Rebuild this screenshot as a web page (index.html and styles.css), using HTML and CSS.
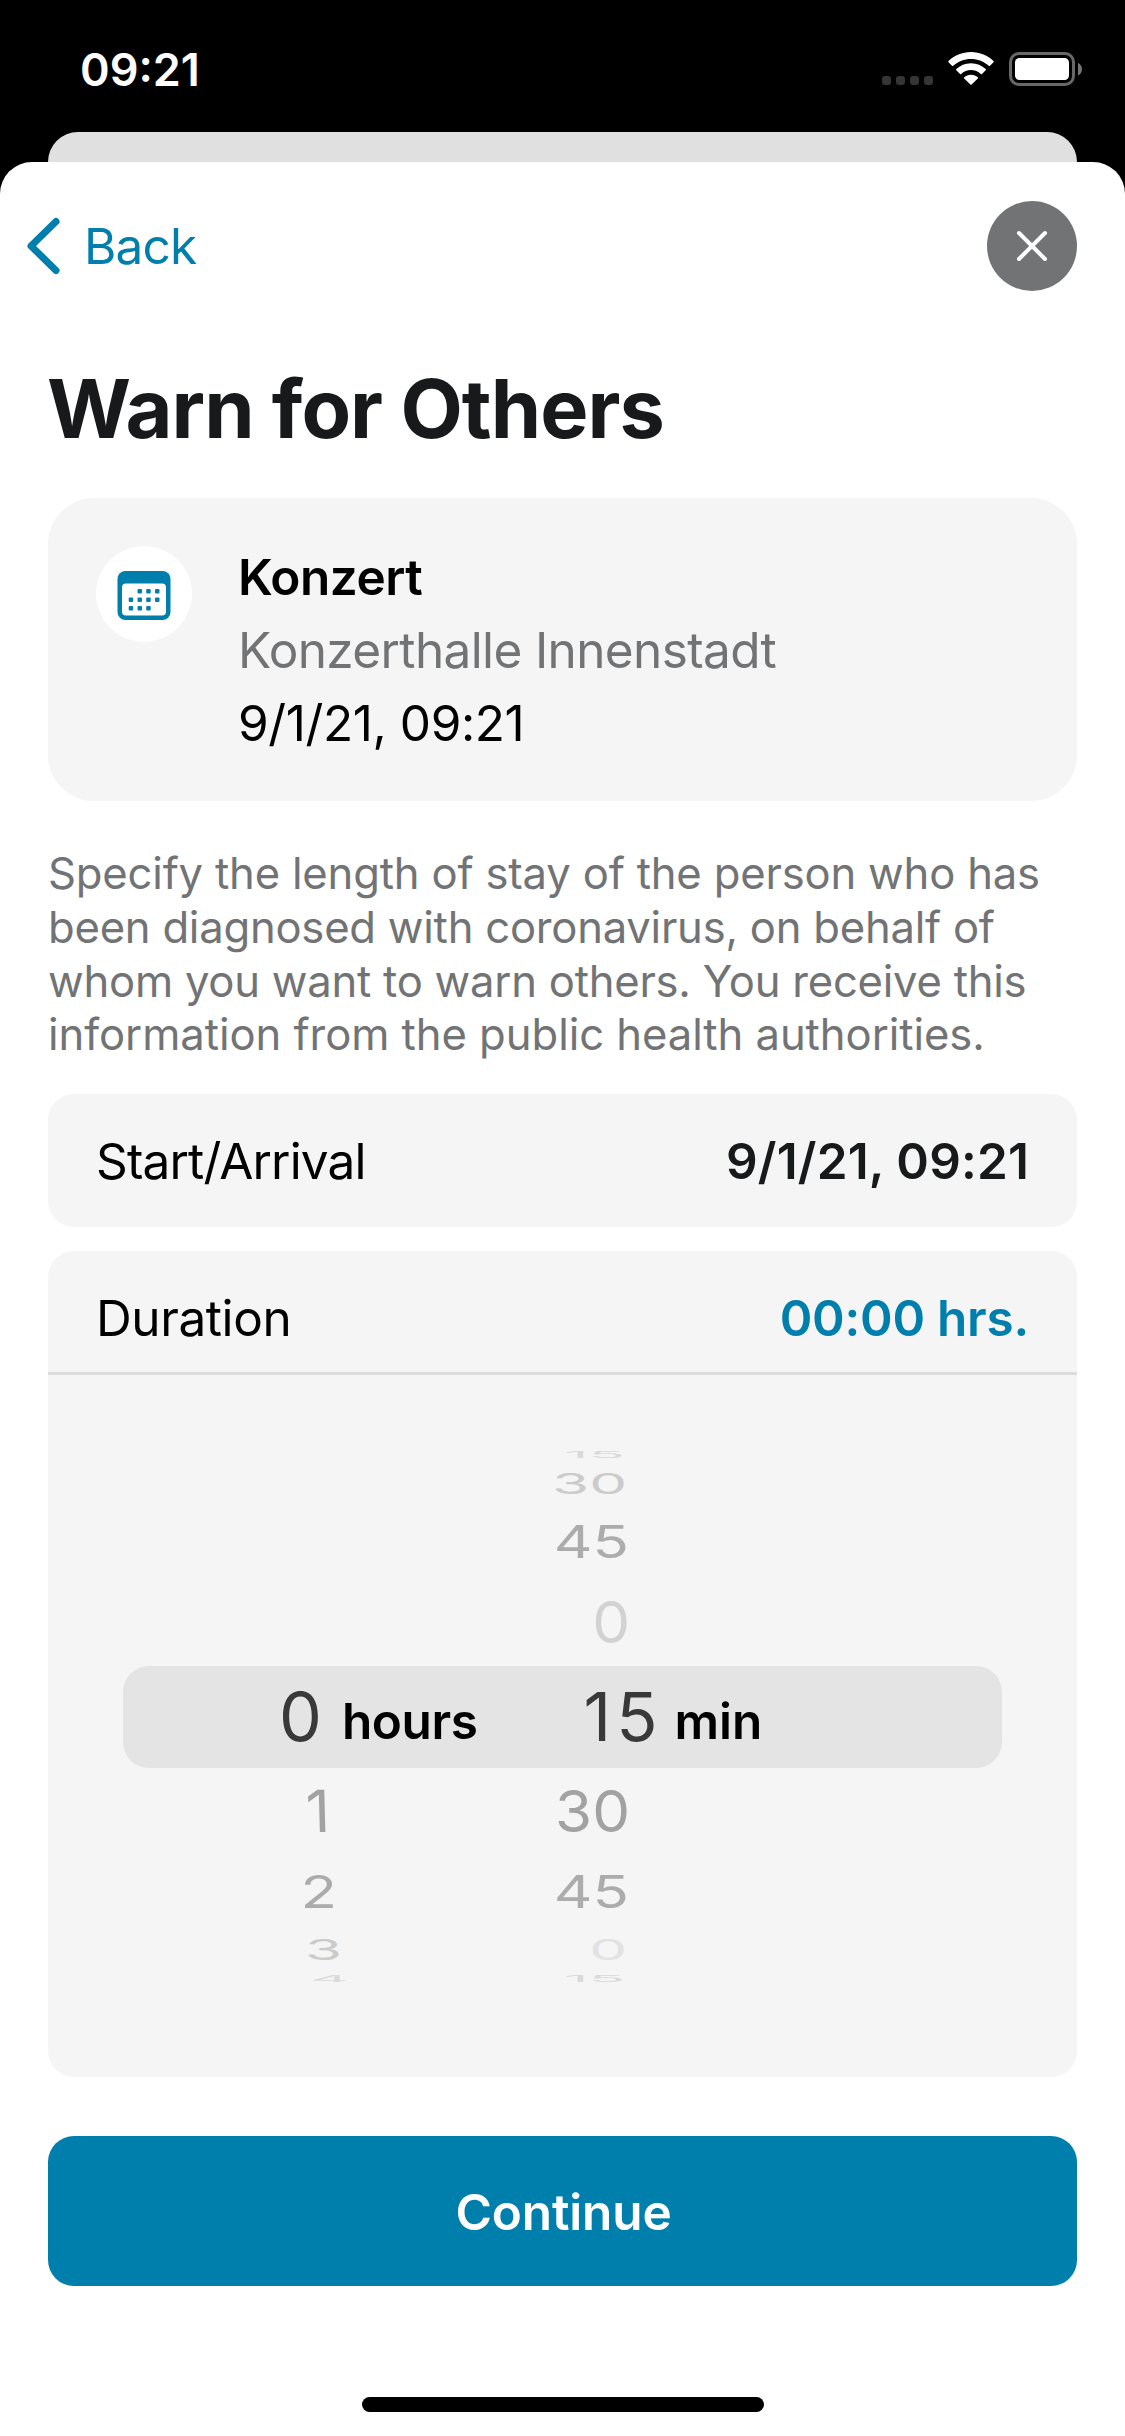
FILE: index.html
```html
<!DOCTYPE html>
<html lang="en">
<head>
<meta charset="utf-8">
<title>Warn for Others</title>
<link rel="stylesheet" href="styles.css">
</head>
<body>
<div class="screen">
  <header class="status">
    <span class="status-time">09:21</span>
    <div class="status-icons">
      <svg class="cellular" width="52" height="34" viewBox="0 0 52 34" fill="#353535">
        <rect x="0" y="24" width="9" height="9" rx="3"/><rect x="14" y="24" width="9" height="9" rx="3"/><rect x="28" y="24" width="9" height="9" rx="3"/><rect x="42" y="24" width="9" height="9" rx="3"/>
      </svg>
      <svg class="wifi" width="46" height="34" viewBox="0 0 46 34" fill="#fff">
        <path d="M23 0C32 0 39.800 3.500 45.500 9Q46 9.600 45.500 10.200L42 13.700Q41.300 14.200 40.700 13.700C36 9.500 29.800 7 23 7S10 9.500 5.300 13.700Q4.700 14.200 4 13.700L.5 10.200Q0 9.600.5 9C6.200 3.500 14 0 23 0Z"/>
        <path d="M23 11.200C28.800 11.200 33.800 13.400 37.700 17Q38.200 17.600 37.700 18.200L34 21.900Q33.400 22.400 32.800 21.900C30.200 19.500 26.800 18.100 23 18.100S15.800 19.500 13.200 21.900Q12.600 22.400 12 21.900L8.300 18.200Q7.800 17.600 8.300 17C12.200 13.400 17.200 11.200 23 11.200Z"/>
        <path d="M23 22.700C25.700 22.700 28.100 23.600 29.800 25.200Q30.300 25.800 29.800 26.400L23.600 32.600Q23 33.100 22.400 32.600L16.200 26.400Q15.700 25.800 16.200 25.200C17.900 23.600 20.300 22.700 23 22.700Z"/>
      </svg>
      <svg class="battery" width="73" height="34" viewBox="0 0 73 34">
        <rect x="1.500" y="1.500" width="63" height="31" rx="8.500" fill="none" stroke="#686868" stroke-width="3"/>
        <rect x="6" y="6" width="54" height="22" rx="4.500" fill="#fff"/>
        <path d="M69 11V23.500C71.500 22.500 73 20 73 17.200S71.500 12 69 11Z" fill="#777"/>
      </svg>
    </div>
  </header>
  <div class="sheet-behind"></div>
  <main class="sheet">
    <nav class="nav">
      <a class="back">
        <svg width="40" height="64" viewBox="0 0 40 64" fill="none" stroke="#007fad" stroke-width="7" stroke-linecap="round" stroke-linejoin="round"><path d="M32 7.500 7 32 32 56.500"/></svg>
        <span>Back</span>
      </a>
      <button class="close" aria-label="Close">
        <svg width="34" height="34" viewBox="0 0 34 34" stroke="#fff" stroke-width="4" stroke-linecap="round"><path d="M4 4 30 30M30 4 4 30"/></svg>
      </button>
    </nav>
    <h1 class="title">Warn for Others</h1>
    <section class="event">
      <div class="event-icon">
        <svg width="54" height="50" viewBox="0 0 54 50">
          <rect x="0.500" width="53" height="49" rx="8" fill="#007fad"/>
          <rect x="5" y="12.500" width="44" height="32" rx="4" fill="#fff"/>
          <g fill="#007fad">
            <rect x="20.500" y="18" width="4.500" height="4.500" rx="1"/><rect x="29.200" y="18" width="4.500" height="4.500" rx="1"/><rect x="38" y="18" width="4.500" height="4.500" rx="1"/>
            <rect x="11.700" y="26.500" width="4.500" height="4.500" rx="1"/><rect x="20.500" y="26.500" width="4.500" height="4.500" rx="1"/><rect x="29.200" y="26.500" width="4.500" height="4.500" rx="1"/><rect x="38" y="26.500" width="4.500" height="4.500" rx="1"/>
            <rect x="11.700" y="35" width="4.500" height="4.500" rx="1"/><rect x="20.500" y="35" width="4.500" height="4.500" rx="1"/><rect x="29.200" y="35" width="4.500" height="4.500" rx="1"/>
          </g>
        </svg>
      </div>
      <div class="event-text">
        <strong class="event-name">Konzert</strong>
        <span class="event-place">Konzerthalle Innenstadt</span>
        <span class="event-date">9/1/21, 09:21</span>
      </div>
    </section>
    <p class="hint">
      <span class="line">Specify the length of stay of the person who has</span>
      <span class="line snug">been diagnosed with coronavirus, on behalf of</span>
      <span class="line snug">whom you want to warn others. You receive this</span>
      <span class="line loose">information from the public health authorities.</span>
    </p>
    <section class="card row start">
      <span class="label-start">Start/Arrival</span>
      <b class="value-start">9/1/21, 09:21</b>
    </section>
    <section class="card duration">
      <div class="row duration-head">
        <span class="label-duration">Duration</span>
        <b class="value-duration">00:00 hrs.</b>
      </div>
      <div class="picker">
        <div class="tick edge"><span></span><span>15</span></div>
        <div class="tick far"><span></span><span>30</span></div>
        <div class="tick mid"><span></span><span>45</span></div>
        <div class="tick near faint"><span></span><span>0</span></div>
        <div class="selected">
          <span class="num">0</span><b class="unit hours">hours</b>
          <span class="num minutes">15</span><b class="unit">min</b>
        </div>
        <div class="tick near"><span class="tilt">1</span><span>30</span></div>
        <div class="tick mid"><span>2</span><span>45</span></div>
        <div class="tick far"><span>3</span><span class="dim">0</span></div>
        <div class="tick edge"><span>4</span><span>15</span></div>
      </div>
    </section>
    <button class="continue">Continue</button>
    <div class="home-bar"></div>
  </main>
</div>
</body>
</html>
```
FILE: styles.css
```css
* { box-sizing: border-box; }
body {
  margin: 0;
  background: #000;
  font-family: Inter, "Liberation Sans", sans-serif;
  color: #000;
}
button { border: 0; padding: 0; font-family: inherit; }
svg { display: block; }

.screen {
  width: 1125px;
  height: 2436px;
  display: flex;
  flex-direction: column;
  overflow: hidden;
}

/* Status bar */
.status {
  height: 132px;
  padding: 38px 43px 32px 80px;
  display: flex;
  align-items: center;
  justify-content: space-between;
  color: #fff;
}
.status-time { font-size: 45px; font-weight: 600; letter-spacing: 0; }
.status-icons { display: flex; align-items: center; }
.wifi { margin-left: 14px; }
.battery { margin-left: 15px; }

/* Sheets */
.sheet-behind {
  height: 30px;
  margin: 0 48px;
  border-radius: 30px 30px 0 0;
  background: #e0e0e0;
}
.sheet {
  flex: 1;
  display: flex;
  flex-direction: column;
  padding: 39px 48px 0;
  border-radius: 32px 32px 0 0;
  background: #fff;
}

.nav {
  height: 90px;
  margin-left: -24px;
  display: flex;
  align-items: center;
  justify-content: space-between;
}
.back {
  display: flex;
  align-items: center;
  gap: 20px;
  color: #007fad;
  font-size: 49.5px;
  letter-spacing: -0.8px;
}
.close {
  width: 90px;
  height: 90px;
  display: grid;
  place-items: center;
  border-radius: 50%;
  background: #727375;
}
.title {
  margin: 70px 0 40px -1px;
  font-size: 81px;
  font-weight: 700;
  line-height: 97px;
  letter-spacing: -0.95px;
  color: #17191a;
}

/* Event summary */
.event {
  height: 303px;
  padding: 42px 48px 0;
  display: flex;
  gap: 46px;
  border-radius: 46px;
  background: #f5f5f5;
}
.event-icon {
  width: 96px;
  height: 96px;
  margin-top: 6px;
  padding-top: 3px;
  display: grid;
  place-items: center;
  border-radius: 50%;
  background: #fff;
}
.event-text {
  display: flex;
  flex-direction: column;
  padding-top: 1px;
  font-size: 49.5px;
  line-height: 73px;
}
.event-name { font-weight: 600; letter-spacing: -0.5px; }
.event-place { color: #727375; letter-spacing: -0.63px; }
.event-date { letter-spacing: -0.4px; }

.hint {
  margin: 46px 0 32px;
  font-size: 43.6px;
  line-height: 53.75px;
  letter-spacing: -0.18px;
  color: #727375;
}
.line { display: block; white-space: nowrap; }
.snug { letter-spacing: -0.23px; }
.loose { letter-spacing: -0.05px; }

/* Cards */
.card { border-radius: 26px; background: #f5f5f5; }
.row {
  display: flex;
  align-items: center;
  justify-content: space-between;
  padding: 0 48px;
  font-size: 49.5px;
}
.row b { font-weight: 600; }
.start { height: 133px; }
.label-start { letter-spacing: -0.84px; }
.value-start { color: #17191a; letter-spacing: 0.16px; }
.duration { margin-top: 24px; height: 826px; }
.duration-head {
  height: 124px;
  padding-top: 13px;
  border-bottom: 3px solid #dcdcdc;
}
.label-duration { letter-spacing: -0.4px; }
.value-duration { color: #007fad; letter-spacing: -0.25px; }

/* Wheel picker */
.picker { padding-top: 72px; }
.tick {
  display: grid;
  grid-template-columns: 304px 304px;
  align-items: center;
  font-size: 60px;
  line-height: 0;
  text-align: right;
}
.near { height: 87px; color: #a2a2a2; }
.mid { height: 74px; color: #acacac; }
.far { height: 42px; color: #cbcbcb; }
.edge { height: 16px; color: #dadada; }
.faint { color: #d2d2d2; }
.dim { color: #e2e2e2; }
.near span { padding: 0 26px 2px 0; transform: scaleY(0.97); }
.near .tilt { padding-right: 22px; transform: scaleY(0.97) skewX(1.5deg); }
.mid span { padding-right: 27px; transform: scaleY(0.745); }
.mid span:first-child { padding-right: 15px; }
.far span { padding-right: 29px; transform: scaleY(0.465); }
.far span:first-child { padding-right: 10px; }
.edge span { padding-right: 31px; transform: scaleY(0.14); }
.edge span:first-child { padding-right: 3px; }
.selected {
  height: 102px;
  margin: 0 75px;
  padding-left: 156px;
  display: flex;
  align-items: center;
  border-radius: 26px;
  background: #e4e4e4;
}
.num { margin: 0 20px 3px 0; font-size: 68px; color: #393939; }
.minutes { margin-right: 12px; letter-spacing: 5px; }
.unit { margin-top: 7px; font-size: 49.5px; font-weight: 600; }
.hours { margin-right: 106px; letter-spacing: -0.4px; }

.continue {
  height: 150px;
  margin-top: 59px;
  padding: 1px 0 0 2px;
  border-radius: 26px;
  background: #007fad;
  color: #fff;
  font-size: 49.5px;
  font-weight: 600;
  letter-spacing: -0.13px;
}
.home-bar {
  width: 402px;
  height: 15px;
  margin: 111px auto 0;
  border-radius: 8px;
  background: #000;
}
```
